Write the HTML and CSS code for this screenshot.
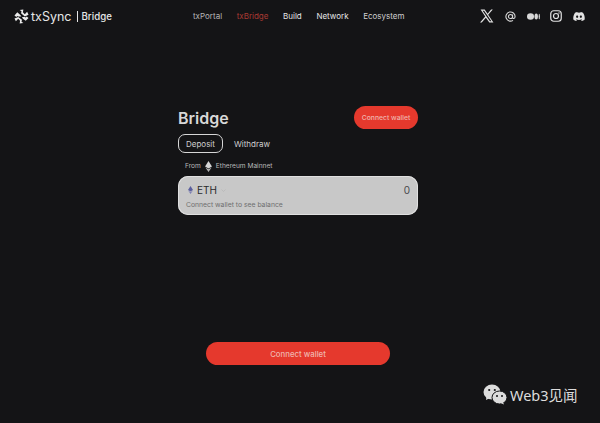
FILE: index.html
```html
<!DOCTYPE html>
<html lang="en">
  <head>
    <meta charset="UTF-8" />
    <meta name="viewport" content="width=device-width, initial-scale=1.0" />
    <title>txSync Bridge</title>
    <link rel="stylesheet" href="styles.css">
  </head>
  <body>
    <!-- Top navigation -->
    <header class="topbar">
      <div class="brand">
        <svg class="brand-icon" viewBox="0 0 16 16" width="15" height="15">
          <path d="M0.500 7 3.500 3.500 6.500 6 8 8 4.500 8 3.500 7.500 2.500 8.500Z" fill="#ececec" />
          <path d="M6 1 10 0.500 9.500 3.500 11.500 5.500 14 3 15.500 6 11.500 8 7.500 4.500 8 2.500Z" fill="#ececec" />
          <path d="M15.500 9.500 12.500 12.500 9.500 10.500 8.500 8.500 11.500 8.500 12.500 9 13.500 8Z" fill="#ececec" />
          <path d="M10 15 6 15.500 6.500 12.500 4.500 10.500 2 13 0.500 10 4.500 8.500 8.500 11.500 8 13.500Z" fill="#ececec" />
        </svg>
        <span class="brand-name">txSync</span>
        <span class="brand-sep"></span>
        <span class="brand-page">Bridge</span>
      </div>
      <nav class="nav">
        <a class="nav-muted">txPortal</a>
        <a class="nav-active">txBridge</a>
        <a>Build</a>
        <a>Network</a>
        <a class="nav-soft">Ecosystem</a>
      </nav>
      <div class="socials">
        <svg viewBox="0 0 24 24" width="14" height="14">
          <path d="M1 1h7l5 7 6-7h3l-8 9 9 13h-7l-6-8-7 8H0l9-10ZM4.500 2.800 17 21.200h2.600L7 2.800Z" fill="#e2e2e2" fill-rule="evenodd" />
        </svg>
        <svg viewBox="0 0 24 24" width="11" height="11">
          <circle cx="12" cy="12" r="4.500" fill="none" stroke="#d8d8d8" stroke-width="2.400" />
          <path d="M16.500 7.500v6.500c0 3.500 5.500 3.500 5.500-2A10 10 0 1 0 17.500 20.500" fill="none" stroke="#d8d8d8" stroke-width="2.400" />
        </svg>
        <svg viewBox="0 0 24 12" width="13" height="7">
          <ellipse cx="6.500" cy="6" rx="6.500" ry="6" fill="#d8d8d8" />
          <ellipse cx="17" cy="6" rx="3.200" ry="5.600" fill="#d8d8d8" />
          <ellipse cx="22.700" cy="6" rx="1.200" ry="5" fill="#d8d8d8" />
        </svg>
        <svg viewBox="0 0 24 24" width="12" height="12">
          <rect x="1.500" y="1.500" width="21" height="21" rx="6" fill="none" stroke="#e2e2e2" stroke-width="2.400" />
          <circle cx="12" cy="12" r="5" fill="none" stroke="#e2e2e2" stroke-width="2.400" />
          <circle cx="18" cy="6" r="1.400" fill="#e2e2e2" />
        </svg>
        <svg viewBox="0 0 24 18" width="12" height="9">
          <path d="M20 1.500A20 20 0 0 0 15.200 0l-.7 1.400a18 18 0 0 0-5 0L8.800 0A20 20 0 0 0 4 1.500C1 6 .2 10.400.6 14.800A20 20 0 0 0 6.500 18l1.300-2a13 13 0 0 1-2-1l.5-.4a14 14 0 0 0 11.400 0l.5.400a13 13 0 0 1-2 1l1.300 2a20 20 0 0 0 5.900-3.200C23.900 9.700 22.600 5.300 20 1.500ZM8.300 12c-1.200 0-2.100-1.100-2.100-2.400s.9-2.400 2.100-2.400 2.200 1.100 2.100 2.400c0 1.300-.9 2.400-2.100 2.400Zm7.400 0c-1.200 0-2.100-1.100-2.100-2.400s.9-2.400 2.100-2.400 2.200 1.100 2.100 2.400c0 1.300-.9 2.400-2.100 2.400Z" fill="#e2e2e2" />
        </svg>
      </div>
    </header>

    <!-- Bridge form -->
    <main class="bridge">
      <div class="bridge-head">
        <h1>Bridge</h1>
        <button class="btn-small">Connect wallet</button>
      </div>
      <div class="tabs">
        <span class="tab tab-on">Deposit</span>
        <span class="tab">Withdraw</span>
      </div>
      <div class="from">
        <span>From</span>
        <svg viewBox="0 0 10 16" width="7" height="11">
          <path d="M5 0 10 8 5 11 0 8Z" fill="#d6d6d6" />
          <path d="M5 12 9.500 9.300 5 16 .5 9.300Z" fill="#b5b5b5" />
        </svg>
        <span>Ethereum Mainnet</span>
      </div>
      <div class="token-card">
        <div class="token-row">
          <div class="token">
            <svg viewBox="0 0 10 16" width="5" height="8">
              <path d="M5 0 10 8 5 11 0 8Z" fill="#5b5f9e" />
              <path d="M5 12 9.500 9.300 5 16 .5 9.300Z" fill="#7d80b5" />
            </svg>
            <span class="token-name">ETH</span>
            <svg viewBox="0 0 10 6" width="5" height="3">
              <path d="M1 1 5 5 9 1" fill="none" stroke="#b4b4b4" stroke-width="1.300" />
            </svg>
          </div>
          <span class="token-amount">0</span>
        </div>
        <p class="token-note">Connect wallet to see balance</p>
      </div>
      <button class="btn-wide">Connect wallet</button>
    </main>

    <!-- Watermark over the page corner -->
    <div class="watermark">
      <svg viewBox="0 0 24 21" width="24" height="21">
        <ellipse cx="9" cy="8" rx="8.500" ry="7.500" fill="#dcdcdc" />
        <path d="M3.500 12.500 3 16 7 14Z" fill="#dcdcdc" />
        <circle cx="6.200" cy="6" r="1.100" fill="#141416" />
        <circle cx="11.800" cy="6" r="1.100" fill="#141416" />
        <ellipse cx="16.500" cy="13.500" rx="7.500" ry="6.500" fill="#dcdcdc" stroke="#141416" stroke-width="1" />
        <path d="M20 18 21 20.500 17.500 19Z" fill="#dcdcdc" />
        <circle cx="14" cy="12" r="1" fill="#141416" />
        <circle cx="19" cy="12" r="1" fill="#141416" />
      </svg>
      <span>Web3见闻</span>
    </div>
  </body>
</html>
```

FILE: styles.css
```css
* {
  box-sizing: border-box;
}
body {
  margin: 0;
  height: 423px;
  overflow: hidden;
  position: relative;
  background-color: #141416;
  color: #e2e2e2;
  font-family: Inter, "Noto Sans CJK SC", sans-serif;
}
.topbar {
  display: flex;
  align-items: center;
  height: 32px;
  padding: 0 14px;
}
.brand {
  display: flex;
  align-items: center;
  width: 171px;
}
.brand-name {
  margin-left: 2px;
  font-size: 12.500px;
  color: #e6e6e6;
}
.brand-sep {
  width: 1px;
  height: 11px;
  margin: 0 4px 0 5px;
  background-color: #e6e6e6;
}
.brand-page {
  font-size: 9.700px;
  font-weight: 500;
  color: #e6e6e6;
}
.nav {
  display: flex;
  gap: 14.600px;
  width: 295px;
  padding-left: 8px;
  font-size: 8px;
  color: #e6e6e6;
}
.nav-muted {
  color: #b5b5b5;
}
.nav-active {
  color: #a83a33;
}
.nav-soft {
  color: #cfcfcf;
}
.socials {
  display: flex;
  align-items: center;
  gap: 10.800px;
}
.bridge {
  display: flex;
  flex-direction: column;
  width: 240px;
  margin: 74px 0 0 178px;
}
.bridge-head {
  display: flex;
  justify-content: space-between;
  align-items: center;
}
h1 {
  margin: 0;
  font-size: 16px;
  font-weight: 600;
  color: #d8d8d8;
}
.btn-small {
  width: 64px;
  height: 23px;
  padding: 0;
  border: none;
  border-radius: 12px;
  background-color: #e5392d;
  color: #f0b5ae;
  font-family: inherit;
  font-size: 6.800px;
  font-weight: 500;
}
.tabs {
  display: flex;
  align-items: center;
  gap: 11px;
  margin-top: 5px;
}
.tab {
  font-size: 8px;
  color: #cfcfcf;
}
.tab-on {
  display: flex;
  align-items: center;
  height: 19px;
  padding: 0 7px;
  border: 1px solid #d6d6d6;
  border-radius: 7px;
}
.from {
  display: flex;
  align-items: center;
  gap: 4px;
  margin: 7px 0 0 7px;
  height: 12px;
  font-size: 6.600px;
  color: #b9b9b9;
}
.token-card {
  margin-top: 4px;
  height: 39px;
  padding: 7px 8px 0;
  border-radius: 10px;
  background-color: #c8c8c8;
  box-shadow: inset 0 0 0 1px #e0e0e0;
}
.token-row {
  display: flex;
  justify-content: space-between;
  align-items: center;
  height: 14px;
}
.token {
  display: flex;
  align-items: center;
  gap: 4px;
  padding-left: 2px;
}
.token-name {
  font-size: 10px;
  color: #2a2a2c;
}
.token-amount {
  font-size: 10px;
  color: #4a4a4c;
}
.token-note {
  margin: 3px 0 0;
  font-size: 6.800px;
  color: #6f6f6f;
}
.btn-wide {
  align-self: center;
  width: 184px;
  height: 23px;
  margin-top: 127px;
  padding: 0;
  border: none;
  border-radius: 12px;
  background-color: #e5392d;
  color: #f0b5ae;
  font-family: inherit;
  font-size: 7.800px;
  font-weight: 500;
}
.watermark {
  position: absolute;
  left: 483px;
  top: 384px;
  display: flex;
  align-items: center;
  gap: 3px;
  font-family: "Noto Sans", "Noto Sans CJK SC", sans-serif;
  font-size: 14.500px;
  color: #dcdcdc;
}
```
